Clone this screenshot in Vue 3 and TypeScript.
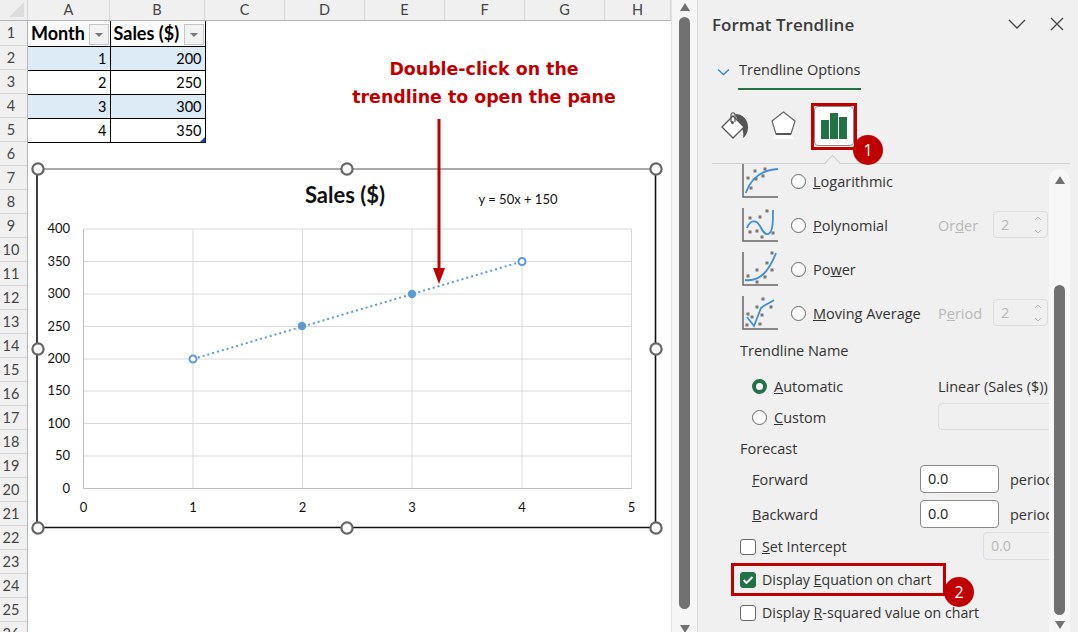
<script setup lang="ts">
const cols = [
  { name: 'A', w: 82 },
  { name: 'B', w: 95 },
  { name: 'C', w: 80 },
  { name: 'D', w: 80 },
  { name: 'E', w: 80 },
  { name: 'F', w: 80 },
  { name: 'G', w: 80 },
  { name: 'H', w: 66 },
]
const rowNums = Array.from({ length: 26 }, (_, i) => i + 1)
const data = [
  [1, 200],
  [2, 250],
  [3, 300],
  [4, 350],
]

const yTicks = [
  { label: '400', y: 229 },
  { label: '350', y: 261.5 },
  { label: '300', y: 294 },
  { label: '250', y: 326.5 },
  { label: '200', y: 359 },
  { label: '150', y: 391 },
  { label: '100', y: 423.5 },
  { label: '50', y: 456 },
  { label: '0', y: 488.5 },
]
const xTicks = [
  { label: '0', x: 83.5 },
  { label: '1', x: 193 },
  { label: '2', x: 302.5 },
  { label: '3', x: 412 },
  { label: '4', x: 522 },
  { label: '5', x: 631.5 },
]
const handles = [
  [38, 169], [347, 169], [656, 169],
  [38, 349], [656, 349],
  [38, 528], [347, 528], [656, 528],
]

// scatter dots of the small trendline thumbnails
const logDots = [[13, 8], [6, 15], [14, 16], [21, 13], [9, 25], [23, 6]]
const polyDots = [[8, 11], [18, 10], [25, 4], [8, 25], [15, 24], [20, 30], [31, 26]]
const powerDots = [[6, 25], [15, 19], [15, 31], [23, 26], [25, 12], [30, 19], [30, 2]]
const avgDots = [[5, 30], [6, 19], [10, 22], [18, 29], [20, 20], [15, 12], [21, 4], [29, 12]]
</script>

<template>
  <div class="app">
    <section class="sheet">
      <div class="col-head">
        <div class="corner"><span class="corner-tri"></span></div>
        <div v-for="c in cols" :key="c.name" class="col-cell" :style="{ width: c.w + 'px' }">{{ c.name }}</div>
      </div>
      <div class="sheet-body">
        <div class="row-head">
          <div v-for="n in rowNums" :key="n" :class="['row-cell', { first: n === 1 }]">{{ n }}</div>
        </div>
        <div class="cells">
          <table class="tbl">
            <thead>
              <tr>
                <th class="col-a">Month<span class="filter"><i></i></span></th>
                <th class="col-b">Sales ($)<span class="filter"><i></i></span></th>
              </tr>
            </thead>
            <tbody>
              <tr v-for="(r, i) in data" :key="r[0]" :class="{ band: i % 2 === 0 }">
                <td>{{ r[0] }}</td>
                <td>{{ r[1] }}</td>
              </tr>
            </tbody>
          </table>
        </div>
      </div>

      <svg class="chart" width="671" height="632" viewBox="0 0 671 632">
        <rect x="37" y="169" width="619" height="359" fill="#fff" />
        <line x1="37" y1="169" x2="656" y2="169" stroke="#555" stroke-width="1" />
        <line x1="37" y1="169" x2="37" y2="528" stroke="#111" stroke-width="1.6" />
        <line x1="655.5" y1="169" x2="655.5" y2="528" stroke="#111" stroke-width="1.6" />
        <line x1="37" y1="527.5" x2="656" y2="527.5" stroke="#111" stroke-width="1.6" />

        <text x="345" y="203" class="c-title" text-anchor="middle">Sales ($)</text>
        <text x="518" y="204" class="c-eq" text-anchor="middle">y = 50x + 150</text>

        <line v-for="t in yTicks" :key="t.label" x1="83.5" x2="631.5" :y1="t.y" :y2="t.y" stroke="#d9d9d9" />
        <line v-for="t in xTicks" :key="t.label" :x1="t.x" :x2="t.x" y1="229" y2="488.5" stroke="#d9d9d9" />
        <line x1="83.5" x2="631.5" y1="488.5" y2="488.5" stroke="#bfbfbf" />
        <line x1="83.5" x2="83.5" y1="229" y2="488.5" stroke="#bfbfbf" />

        <text v-for="t in yTicks" :key="t.label" x="70" :y="t.y + 4" class="c-tick" text-anchor="end">{{ t.label }}</text>
        <text v-for="t in xTicks" :key="t.label" :x="t.x" y="512" class="c-tick" text-anchor="middle">{{ t.label }}</text>

        <line x1="193" y1="359" x2="522" y2="261.5" stroke="#5b9bd5" stroke-width="2" stroke-dasharray="2 3" />
        <circle cx="193" cy="359" r="3.5" fill="#fff" stroke="#5b9bd5" stroke-width="2" />
        <circle cx="302" cy="326" r="4.2" fill="#5b9bd5" />
        <circle cx="412" cy="294" r="4.2" fill="#5b9bd5" />
        <circle cx="522" cy="261.5" r="3.5" fill="#fff" stroke="#5b9bd5" stroke-width="2" />

        <circle v-for="(h, i) in handles" :key="i" :cx="h[0]" :cy="h[1]" r="5.6" fill="#fff" stroke="#666" stroke-width="2.2" />

        <line x1="439" y1="119" x2="439" y2="270" stroke="#c00000" stroke-width="3" />
        <path d="M433 268H445L439 284Z" fill="#c00000" />
      </svg>

      <div class="note">Double-click on the<br />trendline to open the pane</div>
    </section>

    <div class="sheet-scroll">
      <span class="arrow up"></span>
      <span class="sheet-thumb"></span>
      <span class="arrow down"></span>
    </div>

    <aside class="pane">
      <header class="pane-head">
        <h1>Format Trendline</h1>
        <svg class="win-ico" width="20" height="12" viewBox="0 0 20 12"><path d="M2 2L10 10L18 2" fill="none" stroke="#444" stroke-width="1.3" /></svg>
        <svg class="win-ico close" width="14" height="14" viewBox="0 0 14 14"><path d="M1 1L13 13M13 1L1 13" fill="none" stroke="#444" stroke-width="1.3" /></svg>
      </header>

      <div class="tab-row">
        <svg width="13" height="8" viewBox="0 0 13 8"><path d="M1 1.5L6.5 6.5L12 1.5" fill="none" stroke="#2b88d8" stroke-width="1.4" /></svg>
        <span class="tab">Trendline Options</span>
      </div>

      <div class="icon-row">
        <svg width="36" height="36" viewBox="0 0 36 36" class="ico">
          <path d="M19 6C27 6 32 12 32 19C32 24 30 28 27 30C28 25 27 21 23 16Z" fill="#555" />
          <path d="M6 19L17 8L28 19L17 30Z" fill="#fff" stroke="#555" stroke-width="1.3" />
          <path d="M15 14V7C15 4 19 4 19 7V14" fill="none" stroke="#555" stroke-width="1.2" />
          <circle cx="16.5" cy="14.5" r="1.5" fill="#555" />
        </svg>
        <svg width="36" height="36" viewBox="0 0 36 36" class="ico">
          <path d="M10 27L8 31H29L27 27Z" fill="#fafafa" />
          <path d="M18.5 4L30 13L26 26H11L7 13Z" fill="#fff" stroke="#666" stroke-width="1.2" />
          <path d="M11 26H26" stroke="#555" stroke-width="2" />
        </svg>
        <button class="chart-btn">
          <svg width="26" height="26" viewBox="0 0 26 26">
            <rect x="0" y="7" width="8" height="19" fill="#217346" />
            <rect x="9" y="0" width="8" height="26" fill="#217346" />
            <rect x="18" y="4" width="8" height="22" fill="#217346" />
          </svg>
        </button>
      </div>

      <div class="divider"><span class="notch"></span></div>

      <div class="body">
        <div class="list">
          <div class="opt">
            <svg class="tl-ico" width="38" height="36" viewBox="0 0 38 36">
              <path d="M1 1V34H36" fill="none" stroke="#666" stroke-width="1.5" />
              <rect v-for="d in logDots" :key="d.join()" :x="d[0] - 1.5" :y="d[1] - 1.5" width="3" height="3" fill="#777" />
              <path d="M3.7 30C8 18 16 7 36 6" fill="none" stroke="#3d8fd6" stroke-width="1.8" />
            </svg>
            <span class="radio"></span>
            <span class="lbl"><u>L</u>ogarithmic</span>
          </div>
          <div class="opt">
            <svg class="tl-ico" width="38" height="36" viewBox="0 0 38 36">
              <path d="M1 1V34H36" fill="none" stroke="#666" stroke-width="1.5" />
              <rect v-for="d in polyDots" :key="d.join()" :x="d[0] - 1.5" :y="d[1] - 1.5" width="3" height="3" fill="#777" />
              <path d="M5 21C8 13 14 12 18 19C21 25 23 28 26 27C31 26 31 14 31 3" fill="none" stroke="#3d8fd6" stroke-width="1.8" />
            </svg>
            <span class="radio"></span>
            <span class="lbl"><u>P</u>olynomial</span>
            <span class="dim-lbl">Or<u>d</u>er</span>
            <span class="spin"><span>2</span><svg width="10" height="20" viewBox="0 0 10 20"><path d="M2 5L5 2L8 5M2 15L5 18L8 15" fill="none" stroke="#bbb" /></svg></span>
          </div>
          <div class="opt">
            <svg class="tl-ico" width="38" height="36" viewBox="0 0 38 36">
              <path d="M1 1V34H36" fill="none" stroke="#666" stroke-width="1.5" />
              <rect v-for="d in powerDots" :key="d.join()" :x="d[0] - 1.5" :y="d[1] - 1.5" width="3" height="3" fill="#777" />
              <path d="M3 29C18 31 27 20 34 2" fill="none" stroke="#3d8fd6" stroke-width="1.8" />
            </svg>
            <span class="radio"></span>
            <span class="lbl">Po<u>w</u>er</span>
          </div>
          <div class="opt">
            <svg class="tl-ico" width="38" height="36" viewBox="0 0 38 36">
              <path d="M1 1V34H36" fill="none" stroke="#666" stroke-width="1.5" />
              <rect v-for="d in avgDots" :key="d.join()" :x="d[0] - 1.5" :y="d[1] - 1.5" width="3" height="3" fill="#777" />
              <path d="M5 22L12 31L19 13C24 9 28 8 32 5" fill="none" stroke="#3d8fd6" stroke-width="1.8" />
            </svg>
            <span class="radio"></span>
            <span class="lbl"><u>M</u>oving Average</span>
            <span class="dim-lbl period">P<u>e</u>riod</span>
            <span class="spin"><span>2</span><svg width="10" height="20" viewBox="0 0 10 20"><path d="M2 5L5 2L8 5M2 15L5 18L8 15" fill="none" stroke="#bbb" /></svg></span>
          </div>

          <div class="head-lbl name-lbl">Trendline Name</div>
          <div class="sub auto">
            <span class="radio on"></span>
            <span class="lbl"><u>A</u>utomatic</span>
            <span class="right-val">Linear (Sales ($))</span>
          </div>
          <div class="sub">
            <span class="radio"></span>
            <span class="lbl"><u>C</u>ustom</span>
            <span class="blank-box"></span>
          </div>
          <div class="head-lbl fc-lbl">Forecast</div>
          <div class="fc">
            <span class="fc-name"><u>F</u>orward</span>
            <span class="num">0.0</span>
            <span class="unit">periods</span>
          </div>
          <div class="fc">
            <span class="fc-name"><u>B</u>ackward</span>
            <span class="num">0.0</span>
            <span class="unit">periods</span>
          </div>
          <div class="chk-row first">
            <span class="chk"></span>
            <span class="lbl"><u>S</u>et Intercept</span>
            <span class="num dim">0.0</span>
          </div>
          <div class="chk-row">
            <span class="chk on">
              <svg width="12" height="10" viewBox="0 0 12 10"><path d="M1.5 5L4.5 8L10.5 2" fill="none" stroke="#fff" stroke-width="1.8" /></svg>
            </span>
            <span class="lbl">Display <u>E</u>quation on chart</span>
          </div>
          <div class="chk-row">
            <span class="chk"></span>
            <span class="lbl">Display <u>R</u>-squared value on chart</span>
          </div>
        </div>

        <div class="pane-scroll">
          <span class="arrow up"></span>
          <span class="pane-thumb"></span>
          <span class="arrow down"></span>
        </div>
      </div>

      <span class="hl hl-one"></span>
      <span class="hl hl-two"></span>
      <span class="badge badge-one">1</span>
      <span class="badge badge-two">2</span>
    </aside>
  </div>
</template>

<style>
html,
body {
  margin: 0;
  background: #fff;
}
</style>

<style scoped>
.app {
  display: flex;
  width: 1078px;
  height: 632px;
  overflow: hidden;
  font-family: "Open Sans", "Noto Sans", sans-serif;
}

/* sheet */
.sheet {
  position: relative;
  width: 671px;
  flex-shrink: 0;
  overflow: hidden;
  background: #fff;
  font-family: Lato, "Liberation Sans", sans-serif;
}
.col-head {
  display: flex;
  height: 20px;
  background: #f0f0f0;
  border-bottom: 1px solid #b5b5b5;
}
.corner {
  position: relative;
  width: 28px;
  flex-shrink: 0;
  background: #efefef;
  border-right: 1px solid #d6d6d6;
  box-sizing: border-box;
}
.corner-tri {
  position: absolute;
  right: 3px;
  bottom: 3px;
  width: 0;
  height: 0;
  border-left: 15px solid transparent;
  border-bottom: 15px solid #dcdcdc;
}
.col-cell {
  flex-shrink: 0;
  box-sizing: border-box;
  border-right: 1px solid #d6d6d6;
  text-align: center;
  font-size: 14.5px;
  line-height: 20px;
  color: #444;
}
.sheet-body {
  display: flex;
}
.row-head {
  width: 28px;
  flex-shrink: 0;
  background: #f0f0f0;
  box-sizing: border-box;
  border-right: 1px solid #b5b5b5;
}
.row-cell {
  height: 24px;
  box-sizing: border-box;
  border-bottom: 1px solid #d6d6d6;
  padding-right: 5px;
  text-align: center;
  font-size: 14.5px;
  line-height: 23px;
  color: #444;
}
.row-cell.first {
  height: 25px;
  line-height: 24px;
}
.cells {
  flex: 1;
  position: relative;
}
.tbl {
  border-collapse: collapse;
  table-layout: fixed;
  width: 177px;
  color: #000;
  font-size: 14.5px;
}
.col-a {
  width: 82px;
}
.col-b {
  width: 95px;
}
.tbl th,
.tbl td {
  border: 1px solid #000;
  padding: 0 3px;
  height: 24px;
  box-sizing: border-box;
}
.tbl tr:first-child th {
  border-top: 0;
}
.tbl th:first-child,
.tbl td:first-child {
  border-left: 0;
}
.tbl th {
  position: relative;
  height: 25px;
  text-align: left;
  font-size: 18px;
  font-weight: 700;
  background: #fbfbfb;
  white-space: nowrap;
}
.tbl td {
  text-align: right;
}
.band td {
  background: #ddebf7;
}
.filter {
  position: absolute;
  right: 1px;
  top: 3px;
  width: 20px;
  height: 21px;
  box-sizing: border-box;
  border: 1px solid #c6c6c6;
  background: #f2f2f2;
  display: flex;
  align-items: center;
  justify-content: center;
}
.filter i {
  width: 0;
  height: 0;
  border-left: 4px solid transparent;
  border-right: 4px solid transparent;
  border-top: 4px solid #777;
}
.tbl tbody tr:last-child td:last-child {
  position: relative;
}
.tbl tbody tr:last-child td:last-child::after {
  content: "";
  position: absolute;
  right: -1px;
  bottom: -1px;
  width: 6px;
  height: 6px;
  background: #1f3f8f;
  clip-path: polygon(100% 0, 100% 100%, 0 100%);
}
.chart {
  position: absolute;
  left: 0;
  top: 0;
  pointer-events: none;
}
.c-title {
  font-family: Lato, sans-serif;
  font-weight: 700;
  font-size: 22px;
  fill: #111;
}
.c-eq,
.c-tick {
  font-family: Lato, sans-serif;
  font-size: 13px;
  fill: #111;
}
.note {
  position: absolute;
  left: 334px;
  top: 55px;
  width: 300px;
  text-align: center;
  color: #c00000;
  font-family: "DejaVu Sans", sans-serif;
  font-weight: 700;
  font-size: 17.4px;
  line-height: 28px;
  white-space: nowrap;
}

/* main vertical scrollbar */
.sheet-scroll {
  width: 27px;
  flex-shrink: 0;
  box-sizing: border-box;
  background: #f6f6f6;
  border-left: 1px solid #e2e2e2;
  border-right: 1px solid #d8d8d8;
  display: flex;
  flex-direction: column;
  align-items: center;
  padding: 3px 0 0;
}
.sheet-thumb {
  width: 11px;
  height: 592px;
  flex-shrink: 0;
  margin: 6px 0 16px;
  border-radius: 6px;
  background: #717171;
}
.arrow {
  width: 0;
  height: 0;
  flex-shrink: 0;
  border-left: 5.5px solid transparent;
  border-right: 5.5px solid transparent;
}
.arrow.up {
  border-bottom: 8px solid #717171;
}
.arrow.down {
  border-top: 8px solid #717171;
}

/* pane */
.pane {
  position: relative;
  flex: 1;
  min-width: 0;
  display: flex;
  flex-direction: column;
  background: #f0f0f0;
  color: #333;
  font-size: 14.5px;
}
.pane-head {
  display: flex;
  align-items: center;
  height: 50px;
  padding: 0 14px 2px;
  box-sizing: border-box;
}
.pane-head h1 {
  flex: 1;
  margin: 0;
  font-size: 17px;
  font-weight: 600;
  color: #3b3b3b;
}
.win-ico {
  margin-left: 20px;
}
.win-ico.close {
  margin-left: 23px;
}
.tab-row {
  display: flex;
  align-items: flex-start;
  gap: 8px;
  height: 41px;
  padding-left: 19px;
}
.tab-row svg {
  margin-top: 18px;
}
.tab {
  margin-top: 10px;
  height: 28px;
  line-height: 20px;
  width: 122px;
  padding-left: 1px;
  border-bottom: 2.5px solid #217346;
  font-weight: 500;
  white-space: nowrap;
}
.icon-row {
  display: flex;
  align-items: center;
  height: 50px;
  padding-left: 18px;
  gap: 13px;
  margin-top: 10px;
}
.ico {
  flex-shrink: 0;
}
.chart-btn {
  width: 40px;
  height: 40px;
  padding: 0;
  box-sizing: border-box;
  border: 1px solid #8a8a8a;
  border-radius: 4px;
  background: #fff;
  display: flex;
  align-items: center;
  justify-content: center;
}
.divider {
  position: relative;
  height: 1px;
  margin: 12px 8px 0 14px;
  background: #d0d0d0;
}
.notch {
  position: absolute;
  left: 115px;
  top: -6px;
  width: 10px;
  height: 10px;
  background: #f0f0f0;
  border-left: 1px solid #d0d0d0;
  border-top: 1px solid #d0d0d0;
  transform: rotate(45deg);
}
.body {
  flex: 1;
  min-height: 0;
  display: flex;
  padding-right: 8px;
  overflow: hidden;
}
.list {
  flex: 1;
  min-width: 0;
  overflow: hidden;
  padding-left: 44px;
}
.opt {
  display: flex;
  align-items: center;
  height: 44px;
  position: relative;
}
.opt:first-child {
  margin-top: -5px;
}
.tl-ico {
  position: absolute;
  left: 0;
  top: 4px;
}
.opt .radio {
  margin-left: 49px;
}
.radio {
  width: 15px;
  height: 15px;
  flex-shrink: 0;
  box-sizing: border-box;
  border: 1px solid #666;
  border-radius: 50%;
  background: #fff;
}
.radio.on {
  border: 4px solid #217346;
}
.lbl {
  margin-left: 7px;
  white-space: nowrap;
}
.dim-lbl {
  position: absolute;
  left: 196px;
  color: #b8b8b8;
}
.spin {
  position: absolute;
  left: 251px;
  top: 8px;
  width: 55px;
  height: 27px;
  box-sizing: border-box;
  border: 1px solid #dcdcdc;
  border-radius: 4px;
  display: flex;
  align-items: center;
  justify-content: space-between;
  padding: 0 4px 0 7px;
  color: #b8b8b8;
}
.head-lbl {
  height: 22px;
  line-height: 22px;
  margin-left: -2px;
}
.name-lbl {
  margin-top: 5px;
}
.sub {
  position: relative;
  display: flex;
  align-items: center;
  height: 30px;
  padding-left: 10px;
}
.sub.auto {
  margin-top: 9px;
  margin-bottom: 1px;
}
.right-val {
  position: absolute;
  left: 196px;
  white-space: nowrap;
}
.blank-box {
  position: absolute;
  left: 196px;
  top: 1px;
  width: 140px;
  height: 27px;
  box-sizing: border-box;
  border: 1px solid #dcdcdc;
  border-radius: 4px;
}
.fc-lbl {
  margin-top: 6px;
}
.fc {
  position: relative;
  display: flex;
  align-items: center;
  height: 30px;
  margin-top: 5px;
  padding-left: 10px;
}
.fc-lbl + .fc {
  margin-top: 4px;
}
.fc-name {
  width: 168px;
  flex-shrink: 0;
}
.num {
  width: 79px;
  height: 28px;
  flex-shrink: 0;
  box-sizing: border-box;
  border: 1px solid #8a8a8a;
  border-radius: 4px;
  background: #fff;
  padding-left: 7px;
  line-height: 25px;
  color: #222;
}
.unit {
  margin-left: 11px;
  white-space: nowrap;
}
.chk-row {
  position: relative;
  display: flex;
  align-items: center;
  height: 33px;
  margin-left: -2px;
  font-size: 14.2px;
}
.chk-row.first {
  margin-top: 1px;
}
.chk {
  width: 16px;
  height: 16px;
  flex-shrink: 0;
  box-sizing: border-box;
  border: 1px solid #666;
  border-radius: 3px;
  background: #fff;
  display: flex;
  align-items: center;
  justify-content: center;
}
.chk.on {
  background: #217346;
  border-color: #217346;
}
.chk + .lbl {
  margin-left: 6px;
}
.num.dim {
  position: absolute;
  left: 243px;
  top: 2px;
  width: 80px;
  background: transparent;
  border-color: #dcdcdc;
  color: #b8b8b8;
}
.pane-scroll {
  width: 21px;
  flex-shrink: 0;
  margin-top: 5px;
  border-radius: 10px 10px 0 0;
  background: #f7f7f7;
  display: flex;
  flex-direction: column;
  align-items: center;
  padding-top: 7px;
}
.pane-thumb {
  width: 11px;
  height: 330px;
  flex-shrink: 0;
  margin-top: 101px;
  border-radius: 6px;
  background: #717171;
}
.pane-scroll .arrow.down {
  margin-top: 6px;
}
.hl {
  position: absolute;
  box-sizing: border-box;
  border: 3px solid #c00000;
}
.hl-one {
  left: 113px;
  top: 103px;
  width: 46px;
  height: 47px;
}
.hl-two {
  left: 33px;
  top: 563px;
  width: 215px;
  height: 33px;
}
.badge {
  position: absolute;
  width: 30px;
  height: 30px;
  border-radius: 50%;
  background: #c00000;
  color: #fff;
  text-align: center;
  font-size: 16px;
  line-height: 30px;
}
.badge-one {
  left: 155px;
  top: 135px;
}
.badge-two {
  left: 246px;
  top: 577px;
}
</style>
